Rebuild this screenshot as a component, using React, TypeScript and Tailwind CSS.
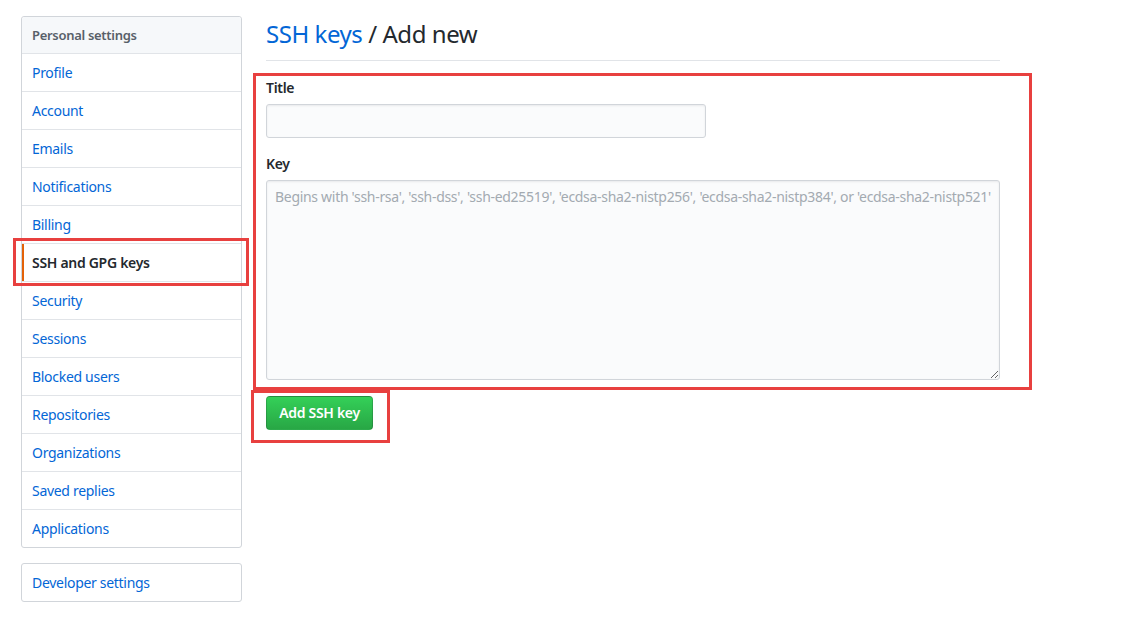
import React from 'react';

const items = [
  'Profile',
  'Account',
  'Emails',
  'Notifications',
  'Billing',
  'SSH and GPG keys',
  'Security',
  'Sessions',
  'Blocked users',
  'Repositories',
  'Organizations',
  'Saved replies',
  'Applications',
];

const font = { fontFamily: '"Segoe UI", "Noto Sans", "Open Sans", Arial, sans-serif' };

function Sidebar() {
  return (
    <div className="w-[221px] shrink-0">
      <nav className="rounded-[3px] border border-[#d1d5da] bg-white">
        <div className="rounded-t-[3px] border-b border-[#e1e4e8] bg-[#f6f8fa] px-[10px] py-[8px] text-[13px] font-semibold leading-[20px] text-[#586069]">
          Personal settings
        </div>
        {items.map((label, i) => {
          const selected = label === 'SSH and GPG keys';
          const last = i === items.length - 1;
          return (
            <div
              key={label}
              className={`relative px-[10px] py-[8px] text-[14px] leading-[21px] ${last ? '' : 'border-b border-[#e1e4e8]'} ${
                selected ? 'font-semibold text-[#24292e]' : 'text-[#0366d6]'
              }`}
            >
              {selected && (
                <>
                  <span className="absolute left-0 top-0 bottom-0 w-[2px] bg-[#e36209]" />
                  <span className="pointer-events-none absolute -left-[9px] -top-[6px] h-[48px] w-[236px] border-[3px] border-[#e8403f]" />
                </>
              )}
              {label}
            </div>
          );
        })}
      </nav>
      <nav className="mt-[15px] rounded-[3px] border border-[#d1d5da] bg-white">
        <div className="px-[10px] py-[8px] text-[14px] leading-[21px] text-[#0366d6]">Developer settings</div>
      </nav>
    </div>
  );
}

function Main() {
  return (
    <div className="w-[734px]">
      <div className="mb-[16px] border-b border-[#e1e4e8] pb-[8px]">
        <h2 className="text-[24px] font-normal leading-[36px] tracking-[-0.45px] text-[#24292e]">
          <span className="text-[#0366d6]">SSH keys</span> / Add new
        </h2>
      </div>
      <div className="relative">
        <span className="pointer-events-none absolute -left-[13px] -top-[4px] -bottom-[10px] w-[779px] border-[3px] border-[#e8403f]" />
        <div className="mb-[15px]">
          <label className="mb-[6px] block text-[14px] font-semibold leading-[21px] text-[#24292e]">Title</label>
          <input
            type="text"
            className="block h-[34px] w-[440px] rounded-[3px] border border-[#d1d5da] bg-[#fafbfc] px-[8px] text-[14px] shadow-[inset_0_1px_2px_rgba(27,31,35,0.075)] outline-none"
          />
        </div>
        <div>
          <label className="mb-[6px] block text-[14px] font-semibold leading-[21px] text-[#24292e]">Key</label>
          <textarea
            placeholder="Begins with 'ssh-rsa', 'ssh-dss', 'ssh-ed25519', 'ecdsa-sha2-nistp256', 'ecdsa-sha2-nistp384', or 'ecdsa-sha2-nistp521'"
            className="block h-[200px] w-[734px] resize-y rounded-[3px] border border-[#d1d5da] bg-[#fafbfc] px-[8px] py-[6px] text-[14px] leading-[20px] tracking-[-0.3px] text-[#24292e] shadow-[inset_0_1px_2px_rgba(27,31,35,0.075)] outline-none placeholder:text-[#a3aab1]"
            style={font}
          />
        </div>
      </div>
      <div className="relative mt-[16px] inline-block">
        <span className="pointer-events-none absolute -left-[15px] -top-[6px] h-[53px] w-[139px] border-[3px] border-[#e8403f]" />
        <button
          className="h-[34px] w-[107px] rounded-[4px] border border-[rgba(27,31,35,0.2)] bg-gradient-to-b from-[#34d058] to-[#28a745] text-[14px] font-semibold leading-[20px] tracking-[-0.3px] text-white"
          style={font}
        >
          Add SSH key
        </button>
      </div>
    </div>
  );
}

export default function App() {
  return (
    <div className="min-h-[625px] w-full bg-white tracking-[-0.3px]" style={font}>
      <div className="flex gap-[24px] pl-[21px] pt-[16px]">
        <Sidebar />
        <Main />
      </div>
    </div>
  );
}
